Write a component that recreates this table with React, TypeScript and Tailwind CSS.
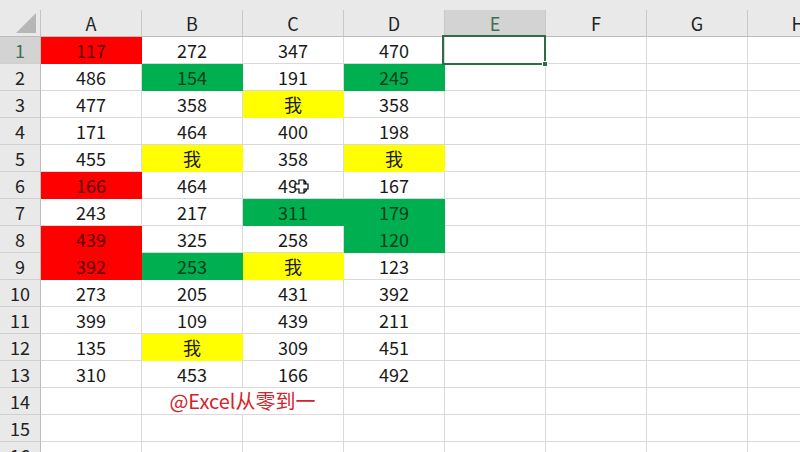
import React from "react";

type Fill = "R" | "G" | "Y" | "";
type Cell = { v: string; f?: Fill };

const data: Cell[][] = [
  [{ v: "117", f: "R" }, { v: "272" }, { v: "347" }, { v: "470" }],
  [{ v: "486" }, { v: "154", f: "G" }, { v: "191" }, { v: "245", f: "G" }],
  [{ v: "477" }, { v: "358" }, { v: "我", f: "Y" }, { v: "358" }],
  [{ v: "171" }, { v: "464" }, { v: "400" }, { v: "198" }],
  [{ v: "455" }, { v: "我", f: "Y" }, { v: "358" }, { v: "我", f: "Y" }],
  [{ v: "166", f: "R" }, { v: "464" }, { v: "493" }, { v: "167" }],
  [{ v: "243" }, { v: "217" }, { v: "311", f: "G" }, { v: "179", f: "G" }],
  [{ v: "439", f: "R" }, { v: "325" }, { v: "258" }, { v: "120", f: "G" }],
  [{ v: "392", f: "R" }, { v: "253", f: "G" }, { v: "我", f: "Y" }, { v: "123" }],
  [{ v: "273" }, { v: "205" }, { v: "431" }, { v: "392" }],
  [{ v: "399" }, { v: "109" }, { v: "439" }, { v: "211" }],
  [{ v: "135" }, { v: "我", f: "Y" }, { v: "309" }, { v: "451" }],
  [{ v: "310" }, { v: "453" }, { v: "166" }, { v: "492" }],
];

const cols = ["A", "B", "C", "D", "E", "F", "G", "H"];

const fillCls: Record<string, string> = {
  R: "bg-[#ff0000] border-[#ff0000] text-[#5a0000]",
  G: "bg-[#00b050] border-[#00b050] text-[#063d1c]",
  Y: "bg-[#ffff00] border-[#ffff00] text-[#1a1a1a]",
  "": "bg-white border-[#d9d9d9] text-[#1a1a1a]",
};

function RowHeader({ n, active }: { n: number; active?: boolean }) {
  return (
    <div
      className={`w-[41px] h-[27px] shrink-0 flex items-center justify-center border-r border-b border-r-[#bcbcbc] border-b-[#d0d0d0] ${
        active ? "bg-[#d3d3d3] text-[#3f6e52]" : "bg-[#e9e9e9] text-[#222]"
      }`}
    >
      {n}
    </div>
  );
}

function DataCell({ c }: { c?: Cell }) {
  const f = (c?.f ?? "") as string;
  return (
    <div
      className={`w-[101px] h-[27px] shrink-0 flex items-center justify-center border-r border-b ${fillCls[f]}`}
    >
      {c?.v ?? ""}
    </div>
  );
}

export default function App() {
  return (
    <div
      className="relative w-[800px] h-[452px] overflow-hidden bg-white text-[18px] leading-none"
      style={{ fontFamily: '"Noto Sans CJK SC", "Noto Sans", sans-serif' }}
    >
      {/* top band */}
      <div className="h-[10px] bg-[#e9e9e9]" />
      {/* column header */}
      <div className="flex h-[27px] bg-[#e9e9e9]">
        <div className="w-[41px] h-[27px] shrink-0 border-r border-b border-r-[#c4c4c4] border-b-[#bcbcbc] flex items-end justify-end pr-[4px] pb-[3px]">
          <svg width="20" height="20" viewBox="0 0 20 20">
            <polygon points="0,20 20,20 20,0" fill="#b6b6b6" />
          </svg>
        </div>
        {cols.map((c) => (
          <div
            key={c}
            className={`w-[101px] h-[27px] shrink-0 flex items-center justify-center border-r border-b border-r-[#c8c8c8] border-b-[#bcbcbc] ${
              c === "E" ? "bg-[#d3d3d3] text-[#3f6e52]" : "text-[#222]"
            }`}
          >
            {c}
          </div>
        ))}
      </div>
      {/* data rows */}
      {data.map((row, i) => (
        <div key={i} className="flex">
          <RowHeader n={i + 1} active={i === 0} />
          {cols.map((_, j) => (
            <DataCell key={j} c={row[j]} />
          ))}
        </div>
      ))}
      {/* row 14 with merged B:C */}
      <div className="flex">
        <RowHeader n={14} />
        <DataCell />
        <div className="w-[202px] h-[27px] shrink-0 flex items-center justify-center border-r border-b border-[#d9d9d9] text-[#d4232b] text-[20px]">
          @Excel从零到一
        </div>
        {[3, 4, 5, 6, 7].map((j) => (
          <DataCell key={j} />
        ))}
      </div>
      {[15, 16].map((n) => (
        <div key={n} className="flex">
          <RowHeader n={n} />
          {cols.map((_, j) => (
            <DataCell key={j} />
          ))}
        </div>
      ))}

      {/* selection box on E1 */}
      <div className="absolute left-[442px] top-[35px] w-[104px] h-[30px] border-2 border-[#2f6b47]" />
      <div className="absolute left-[542px] top-[61px] w-[6px] h-[6px] bg-[#2f6b47] border border-white" />

      {/* fat cross cursor */}
      <svg
        className="absolute left-[294px] top-[179px]"
        width="15"
        height="15"
        viewBox="0 0 15 15"
      >
        <path
          d="M5 1 H10 V5 H14 V10 H10 V14 H5 V10 H1 V5 H5 Z"
          fill="#ffffff"
          stroke="#000000"
          strokeWidth="1.2"
        />
      </svg>
    </div>
  );
}
